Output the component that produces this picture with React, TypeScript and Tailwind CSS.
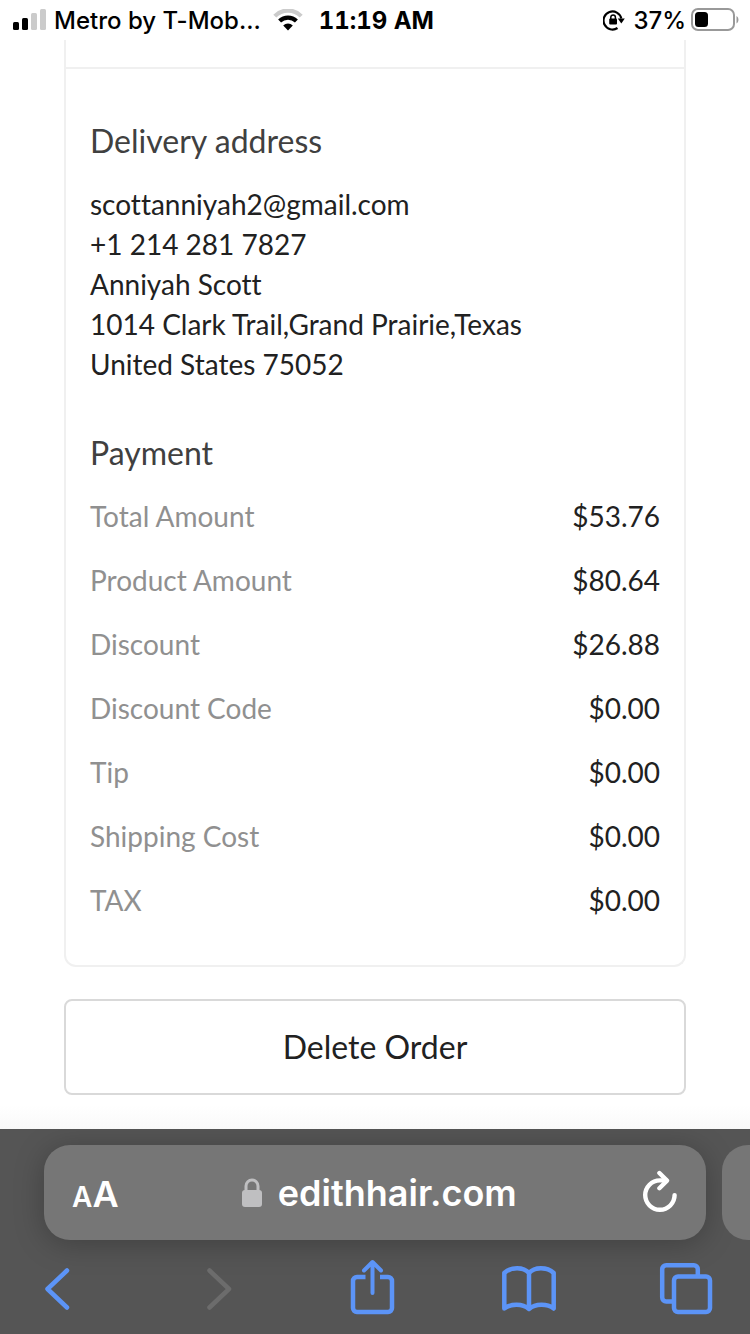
import type { ReactNode } from "react";

const address = [
  "scottanniyah2@gmail.com",
  "+1 214 281 7827",
  "Anniyah Scott",
  "1014 Clark Trail,Grand Prairie,Texas",
  "United States 75052",
];

const payment = [
  { label: "Total Amount", value: "$53.76" },
  { label: "Product Amount", value: "$80.64" },
  { label: "Discount", value: "$26.88" },
  { label: "Discount Code", value: "$0.00" },
  { label: "Tip", value: "$0.00" },
  { label: "Shipping Cost", value: "$0.00" },
  { label: "TAX", value: "$0.00" },
];

function StatusBar() {
  return (
    <header className="flex h-10 items-center justify-between pl-3 pr-2.5 font-['Inter',sans-serif] text-2xl text-black">
      <div className="flex items-center">
        <svg width="34" height="22" viewBox="0 0 34 22" aria-hidden="true">
          <rect x="1" y="13" width="6" height="8" rx="1.5" />
          <rect x="10" y="9" width="6" height="12" rx="1.5" />
          <rect x="19" y="4" width="6" height="17" rx="1.5" fill="#cbcbcb" />
          <rect x="28" y="0" width="6" height="21" rx="1.5" fill="#cbcbcb" />
        </svg>
        <span className="ml-2 pt-0.5 font-medium">Metro by T-Mob...</span>
        <svg className="ml-3" width="30" height="22" viewBox="0 0 30 22" fill="none" aria-hidden="true">
          <path d="M1.8 7.100C9-.3 21-.3 28.200 7.100" stroke="#cbcbcb" strokeWidth="4.2" />
          <path d="M6.600 12c4.700-4.600 12.100-4.600 16.800 0" stroke="#000" strokeWidth="4.2" />
          <path d="M10.200 16.600c2.700-2.700 6.900-2.700 9.600 0L15 21.400z" fill="#000" />
        </svg>
        <span className="ml-4 pt-0.5 font-bold tabular-nums">11:19 AM</span>
      </div>
      <div className="flex items-center">
        <svg width="22" height="22" viewBox="0 0 22 22" fill="none" aria-hidden="true">
          <path d="M14.500 19A9 9 0 1 1 18.300 9.500" stroke="#000" strokeWidth="2.2" />
          <path d="M14.800 9.500h7l-3.500 5z" fill="#000" />
          <rect x="6.200" y="9.600" width="7.800" height="6" rx="1" fill="#000" />
          <path d="M7.800 10V8.200a2.300 2.300 0 0 1 4.600 0V10" stroke="#000" strokeWidth="1.5" />
        </svg>
        <span className="ml-2 mr-1 pt-0.5 font-medium">37%</span>
        <svg width="50" height="24" viewBox="0 0 50 24" aria-hidden="true">
          <rect x="2" y="1" width="42" height="21" rx="6" fill="none" stroke="#999" strokeWidth="2" />
          <rect x="5" y="4" width="13" height="15" rx="3.5" />
          <path d="M46.500 8v7.500c2.600-1.500 2.600-6 0-7.500z" fill="#999" />
        </svg>
      </div>
    </header>
  );
}

function ToolButton({ label, disabled, children }: { label: string; disabled?: boolean; children: ReactNode }) {
  return (
    <button
      type="button"
      aria-label={label}
      disabled={disabled}
      className="size-14 text-[#5c94f7] disabled:text-[#6c6c6c]"
    >
      <svg
        viewBox="0 0 56 56"
        className="size-14"
        fill="none"
        stroke="currentColor"
        strokeWidth="4.5"
        strokeLinecap="round"
        strokeLinejoin="round"
      >
        {children}
      </svg>
    </button>
  );
}

function BrowserBar() {
  return (
    <footer className="overflow-hidden bg-[#555] pb-[21px] pt-4">
      <div className="flex gap-4 pl-11">
        <div className="flex h-[95px] w-[calc(100%-44px)] shrink-0 items-center justify-between rounded-[26px] bg-[#767676] pl-7 pr-[26px] font-['Inter',sans-serif] text-white shadow-[0_4px_30px_rgba(0,0,0,0.25)]">
          <button type="button" aria-label="Page settings" className="flex items-baseline pt-1.5 font-semibold">
            <span className="text-[28px] leading-10">A</span>
            <span className="text-4xl leading-10">A</span>
          </button>
          <div className="flex items-center gap-4">
            <svg width="20" height="30" viewBox="0 0 20 30" fill="none" aria-hidden="true">
              <rect x="0" y="12" width="20" height="17" rx="3" fill="#bfbfc1" />
              <path d="M4 13V8a6 6 0 0 1 12 0v5" stroke="#bfbfc1" strokeWidth="3" />
            </svg>
            <span className="text-4xl font-semibold">edithhair.com</span>
          </div>
          <button type="button" aria-label="Reload">
            <svg width="40" height="46" viewBox="0 0 40 46" fill="none" stroke="currentColor" strokeWidth="4.4" strokeLinecap="round" strokeLinejoin="round">
              <path d="M26 10.400H19.900a14.700 14.700 0 1 0 14.700 14.700" />
              <path d="M19.400 3l7.600 7.600-7.600 7.600" />
            </svg>
          </button>
        </div>
        <div className="h-[95px] w-20 shrink-0 rounded-[26px] bg-[#767676]" />
      </div>

      <nav className="mt-[19px] flex justify-between pl-[30px] pr-9">
        <ToolButton label="Back">
          <path d="M37 11.500L17.500 30 37 48.500" />
        </ToolButton>
        <ToolButton label="Forward" disabled>
          <path d="M22.500 11.500L42 30 22.500 48.500" />
        </ToolButton>
        <ToolButton label="Share">
          <path d="M21.500 18H13a4 4 0 0 0-4 4v27a4 4 0 0 0 4 4h31a4 4 0 0 0 4-4V22a4 4 0 0 0-4-4h-8" strokeLinecap="butt" />
          <path d="M28.500 34V3M20 11.500L28.500 3l8.500 8.500" strokeWidth="4" />
        </ToolButton>
        <ToolButton label="Bookmarks">
          <path d="M28 14v35.500M28 14C22.500 7.600 10 7.600 3.300 14v35.500c6.700-5 18.200-5 24.700.5 6.500-5.500 18-5.500 24.700-.5V14C46 7.600 33.500 7.600 28 14z" />
        </ToolButton>
        <ToolButton label="Tabs">
          <rect x="16" y="17.500" width="36" height="35.500" rx="4" />
          <path d="M15 42.500H8.200a4 4 0 0 1-4-4V10.200a4 4 0 0 1 4-4h27.600a4 4 0 0 1 4 4V17" strokeLinecap="butt" />
        </ToolButton>
      </nav>
    </footer>
  );
}

export default function App() {
  return (
    <div className="flex min-h-screen flex-col bg-white font-['Lato',sans-serif] [font-variant-ligatures:none]">
      <StatusBar />

      <main className="flex-1 bg-[linear-gradient(to_top,#f9f9f9,#fff_24px)] px-16 pb-[34px]">
        <section className="rounded-b-xl border-x-2 border-b-2 border-[#f0f0f0] text-[28px] leading-10 text-[#212121]">
          <div className="h-[29px] border-b-2 border-[#f0f0f0]" />
          <div className="px-6 pb-[45px] pt-[52px]">
            <h2 className="text-[32px] leading-10 text-[#404040]">Delivery address</h2>
            <address className="mt-[23px] not-italic">
              {address.map((line) => (
                <p key={line}>{line}</p>
              ))}
            </address>

            <h2 className="mt-[49px] text-[32px] leading-10 text-[#404040]">Payment</h2>
            <dl className="mt-[23px] flex flex-col gap-6">
              {payment.map((row) => (
                <div key={row.label} className="flex justify-between">
                  <dt className="text-[#909090]">{row.label}</dt>
                  <dd>{row.value}</dd>
                </div>
              ))}
            </dl>
          </div>
        </section>

        <button
          type="button"
          className="mt-8 h-24 w-full rounded-lg border-2 border-[#d9d9d9] bg-white text-[32px] leading-10 text-[#212121]"
        >
          Delete Order
        </button>
      </main>

      <BrowserBar />
    </div>
  );
}
